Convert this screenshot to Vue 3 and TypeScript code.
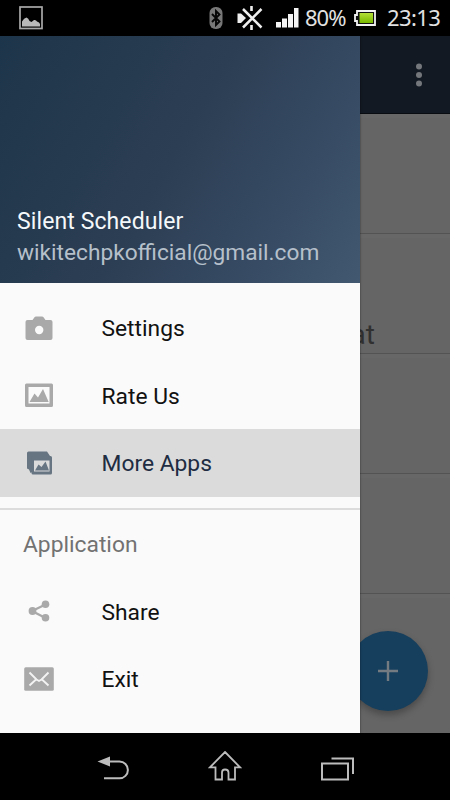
<script setup lang="ts">
interface MenuItem {
  label: string
  icon: 'camera' | 'image' | 'gallery' | 'share' | 'mail'
  selected?: boolean
}

interface MenuGroup {
  title?: string
  items: MenuItem[]
}

const groups: MenuGroup[] = [
  {
    items: [
      { label: 'Settings', icon: 'camera' },
      { label: 'Rate Us', icon: 'image' },
      { label: 'More Apps', icon: 'gallery', selected: true },
    ],
  },
  {
    title: 'Application',
    items: [
      { label: 'Share', icon: 'share' },
      { label: 'Exit', icon: 'mail' },
    ],
  },
]

const cards: string[] = ['', 'at', '', '', '']
</script>

<template>
  <div class="phone">
    <header class="status">
      <svg class="s-picture" viewBox="0 0 24 24">
        <rect x="1" y="1" width="22" height="21.5" fill="none" stroke="#a9a9a9" stroke-width="1.7" />
        <path d="M3 20.500V15.500Q5 12 7.500 11.500Q9.500 12 10.500 15L12.500 16L15 14Q17 13.500 18 15.500Q20.500 16 21 18V20.500Z" fill="#b9b9b9" />
      </svg>
      <svg class="s-bluetooth" viewBox="0 0 14 22">
        <rect x="0.500" width="13" height="22" rx="6" fill="#777" />
        <path d="M3 7L10.500 14.500L7 18V4L10.500 7.500L3 15" fill="none" stroke="#050505" stroke-width="1.900" />
      </svg>
      <svg class="s-mute" viewBox="0 0 26 24">
        <path d="M0.500 7.500H4L9 12L4 17H0.500Z" fill="#eee" />
        <path d="M14.500 0V5M14.500 19V24" stroke="#eee" stroke-width="2.600" />
        <path d="M6 3L24.500 21.500M24.500 3L6 21.500" stroke="#eee" stroke-width="2.500" />
      </svg>
      <svg class="s-signal" viewBox="0 0 23 20">
        <path d="M0 14H5V19.500H0ZM6 10.500H11V19.500H6ZM12 6H17V19.500H12ZM18 0H22.500V19.500H18Z" fill="#f4f4f4" />
      </svg>
      <span class="s-percent">80%</span>
      <svg class="s-battery" viewBox="0 0 22 16">
        <defs>
          <linearGradient id="charge" x1="0" y1="0" x2="0" y2="1">
            <stop offset="0" stop-color="#b4df37" />
            <stop offset="1" stop-color="#78b900" />
          </linearGradient>
        </defs>
        <path d="M3 1H21V15H3V11H1V5H3Z" fill="#111" stroke="#f2f2f2" stroke-width="1.800" />
        <rect x="5.500" y="3" width="13.500" height="10" fill="url(#charge)" />
      </svg>
      <span class="s-clock">23:13</span>
    </header>

    <main class="screen">
      <section class="page">
        <div class="toolbar">
          <svg class="overflow" viewBox="0 0 8 26">
            <circle cx="4" cy="4.500" r="3" />
            <circle cx="4" cy="13" r="3" />
            <circle cx="4" cy="21.500" r="3" />
          </svg>
        </div>
        <div v-for="(text, i) in cards" :key="i" class="card">
          <span v-if="text" class="card-text">{{ text }}</span>
        </div>
        <button class="fab" aria-label="Add">
          <svg viewBox="0 0 20 20"><path d="M10 0V20M0 10H20" stroke="#747c82" stroke-width="2.400" /></svg>
        </button>
      </section>

      <aside class="drawer">
        <div class="profile">
          <div class="name">Silent Scheduler</div>
          <div class="email">wikitechpkofficial@gmail.com</div>
        </div>
        <nav v-for="(group, g) in groups" :key="g" class="group">
          <h2 v-if="group.title" class="group-title"><span>{{ group.title }}</span></h2>
          <a v-for="item in group.items" :key="item.label" class="item" :class="{ selected: item.selected }">
            <svg class="icon" viewBox="0 0 30 30">
              <path
                v-if="item.icon === 'camera'"
                fill-rule="evenodd"
                d="M3.500 7H8.500L10.500 4.200Q11 3.500 12 3.500H18Q19 3.500 19.500 4.200L21.500 7H26.500Q28.500 7 28.500 9V25Q28.500 27 26.500 27H3.500Q1.500 27 1.500 25V9Q1.500 7 3.500 7ZM15.200 12.800A4.200 4.200 0 1 0 15.200 21.200A4.200 4.200 0 1 0 15.200 12.800Z"
              />
              <path
                v-else-if="item.icon === 'image'"
                fill-rule="evenodd"
                d="M2.500 3.500H27.500Q29 3.500 29 5V25.500Q29 27 27.500 27H2.500Q1 27 1 25.500V5Q1 3.500 2.500 3.500ZM4.500 7V23.500H25.500V7ZM5.500 22L10.500 13.500L14 17.500L19 9L24.700 22Z"
              />
              <g v-else-if="item.icon === 'gallery'">
                <path d="M4.500 3.500H23L26 8H9V23.500L6.500 25L5 21.500L3 20.500V5Q3 3.500 4.500 3.500Z" />
                <path fill-rule="evenodd" d="M9 8H26.500Q28 8 28 9.500V25Q28 26.500 26.500 26.500H9Q7.500 26.500 7.500 25V9.500Q7.500 8 9 8ZM10 12.500V23.500H25.500V12.500ZM11 22.500L14.500 16.500L17.500 19L21.500 13.500L25 22.500Z" />
              </g>
              <g v-else-if="item.icon === 'share'">
                <path d="M21.500 8.500L8 15L21.500 22" fill="none" stroke="currentColor" stroke-width="2.300" />
                <circle cx="21.500" cy="8.300" r="3.800" /><circle cx="8.500" cy="15" r="3.900" /><circle cx="21.500" cy="21.700" r="3.800" />
              </g>
              <g v-else>
                <rect x="0.200" y="3.300" width="29.600" height="23.400" rx="1.500" />
                <path d="M5.500 8.500L12.500 15.500L15 17L17.500 15.500L24.500 8.500M5.500 21.500L12 15.500M24.500 21.500L18 15.500" fill="none" stroke="#f3f3f3" stroke-width="1.900" />
              </g>
            </svg>
            <span class="label">{{ item.label }}</span>
          </a>
        </nav>
      </aside>
    </main>

    <footer class="navbar">
      <svg class="n-back" viewBox="0 0 34 26">
        <path d="M1.500 5.500L14 0.500V10.500Z" fill="#bcbcbc" />
        <path d="M13 5.500H23.500A8.400 8.400 0 0 1 23.500 22.300H8" fill="none" stroke="#bcbcbc" stroke-width="2" />
      </svg>
      <svg class="n-home" viewBox="0 0 34 32">
        <path d="M17 1L32 16.300H27V28.500H20.500V21.500Q20.500 18.500 17 18.500Q14 18.500 14 21.500V28.500H7.500V16.300H2Z" fill="none" stroke="#bcbcbc" stroke-width="1.800" />
      </svg>
      <svg class="n-recent" viewBox="0 0 34 24">
        <rect x="2" y="6.500" width="26" height="16" fill="none" stroke="#bcbcbc" stroke-width="2" />
        <path d="M11.500 1.500H33V17" fill="none" stroke="#bcbcbc" stroke-width="2" />
      </svg>
    </footer>
  </div>
</template>

<style>
body {
  background: #000;
}
</style>

<style scoped>
.phone {
  width: 450px;
  height: 800px;
  display: flex;
  flex-direction: column;
  background: #000;
  overflow: hidden;
  font-family: Roboto, "Noto Sans", sans-serif;
}
.status {
  height: 36px;
  flex: none;
  display: flex;
  align-items: center;
  color: #e2e2e2;
  font-family: "Noto Sans", sans-serif;
  font-size: 22px;
  line-height: 34px;
}
.s-picture {
  width: 24px;
  height: 24px;
  margin-left: 19px;
}
.s-bluetooth {
  width: 14px;
  height: 22px;
  margin-left: auto;
}
.s-mute {
  width: 26px;
  height: 24px;
  margin-left: 14px;
}
.s-signal {
  width: 23px;
  height: 20px;
  margin-left: 13px;
}
.s-percent {
  width: 41px;
  margin-left: 6px;
  padding-bottom: 2px;
  letter-spacing: -1px;
}
.s-battery {
  width: 22px;
  height: 16px;
  margin-left: 8px;
}
.s-clock {
  width: 54px;
  margin: 0 9px 0 11px;
  padding-bottom: 2px;
  letter-spacing: -0.6px;
}
.screen {
  position: relative;
  height: 697px;
  flex: none;
}
.page {
  height: 697px;
  background: #656565;
  overflow: hidden;
}
.toolbar {
  height: 78px;
  box-sizing: border-box;
  display: flex;
  align-items: center;
  justify-content: flex-end;
  padding-right: 27px;
  background: #131922;
  border-bottom: 1px solid #090c11;
}
.overflow {
  width: 8px;
  height: 26px;
  fill: #74777b;
}
.card {
  height: 120px;
  box-sizing: border-box;
  display: flex;
  align-items: flex-end;
  justify-content: flex-end;
  padding: 0 75px 2px 0;
  border-top: 4px solid #676767;
  border-bottom: 1px solid #535353;
  color: #303030;
  font-size: 28px;
  line-height: 32px;
}
.card:nth-last-child(2) {
  height: 140px;
  border-bottom: 0;
}
.fab {
  position: absolute;
  left: 348px;
  top: 595px;
  width: 80px;
  height: 80px;
  display: grid;
  place-items: center;
  padding: 0;
  border: 0;
  border-radius: 50%;
  background: #163f5d;
  box-shadow: 0 4px 7px rgba(0, 0, 0, 0.28);
}
.fab svg {
  width: 20px;
  height: 20px;
}
.drawer {
  position: absolute;
  inset: 0 auto 0 0;
  width: 360px;
  background: #fafafa;
  box-shadow: 0 0 2px rgba(0, 0, 0, 0.5);
}
.profile {
  height: 247px;
  box-sizing: border-box;
  display: flex;
  flex-direction: column;
  justify-content: flex-end;
  padding: 0 17px 15px;
  background: linear-gradient(120deg, #1d354a 0%, #2c3e53 48%, #33475f 68%, #415870 100%);
}
.name {
  color: #f5f8fa;
  font-size: 23px;
  line-height: 31px;
  letter-spacing: 0.1px;
}
.email {
  color: #b6c0cb;
  font-size: 22.700px;
  line-height: 31px;
}
.group {
  padding: 11px 0 11.500px;
}
.group + .group {
  padding-top: 0;
  border-top: 2px solid #dcdcdc;
}
.group-title {
  height: 67.500px;
  margin: 0;
  display: flex;
  align-items: center;
  padding-left: 23px;
  color: #727272;
  font-size: 22.800px;
  font-weight: 400;
}
.group-title span,
.label {
  padding-top: 2px;
}
.item {
  height: 67.500px;
  display: flex;
  align-items: center;
  padding-left: 24px;
  color: #111;
  font-size: 22.800px;
}
.icon {
  width: 30px;
  height: 30px;
  margin-right: 47.500px;
  color: #a9a9a9;
  fill: currentColor;
}
.selected {
  background: #dbdbdb;
  color: #202c42;
}
.selected .icon {
  color: #677582;
}
.navbar {
  flex: 1;
  display: flex;
  align-items: flex-start;
}
.n-back {
  width: 34px;
  height: 26px;
  margin: 23px 0 0 96px;
}
.n-home {
  width: 34px;
  height: 32px;
  margin: 18px 0 0 78px;
}
.n-recent {
  width: 34px;
  height: 24px;
  margin: 24px 0 0 78px;
}
</style>
